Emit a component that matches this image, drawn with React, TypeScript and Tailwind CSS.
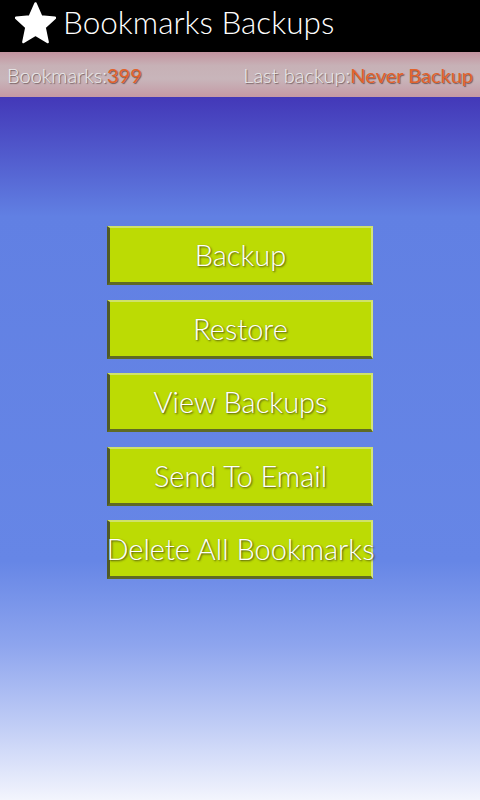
const actions = ["Backup", "Restore", "View Backups", "Send To Email", "Delete All Bookmarks"];

function BevelButton({ label }: { label: string }) {
    return (
        <button className="w-[266px] h-[59px] bg-[#bcdb04] border-l-[3px] border-b-[3px] border-t-2 border-r-2 border-l-[#505a25] border-b-[#5f6a25] border-t-[#cfe26a] border-r-[#d3e47a] flex items-center justify-center text-white text-[29px] font-light whitespace-nowrap [text-shadow:1px_1px_2px_rgba(60,60,20,0.9)]">
            {label}
        </button>
    );
}

export default function App() {
    return (
        <div className="w-[480px] h-[800px] flex flex-col overflow-hidden font-['Lato',sans-serif]">
            <header className="h-[52px] bg-black flex items-center gap-[7px] pl-[15px]">
                <svg width="41" height="43" viewBox="0 0 41 43" className="-mt-[6px]">
                    <polygon
                        points="20.5,1.5 26.2,14.6 40,15.8 29.6,25.4 32.6,40 20.5,32.6 8.4,40 11.4,25.4 1,15.8 14.8,14.6"
                        fill="white"
                        stroke="white"
                        strokeWidth="2.5"
                        strokeLinejoin="round"
                    />
                </svg>
                <h1 className="text-white text-[31.5px] font-light leading-none -mt-[6px]">Bookmarks Backups</h1>
            </header>

            <div className="h-[45px] bg-[linear-gradient(to_bottom,#c3939f_0%,#c7b1b6_30%,#c8b5ba_60%,#c499a4_100%)] flex items-center justify-between px-[7px] text-[20px] [text-shadow:1px_1px_1px_rgba(90,70,70,0.8)]">
                <span className="text-[#ececec] font-light">
                    Bookmarks:<span className="text-[#e2622b] font-normal">399</span>
                </span>
                <span className="text-[#ececec] font-light">
                    Last backup:<span className="text-[#e2622b] font-normal">Never Backup</span>
                </span>
            </div>

            <main className="flex-1 bg-[linear-gradient(to_bottom,#4338b8_0%,#6180e3_17%,#6686e6_66%,#8ea5ee_78%,#c3cff6_90%,#f3f5fd_100%)] flex flex-col items-center pt-[129px] gap-[14.5px]">
                {actions.map((a) => (
                    <BevelButton key={a} label={a} />
                ))}
            </main>
        </div>
    );
}
